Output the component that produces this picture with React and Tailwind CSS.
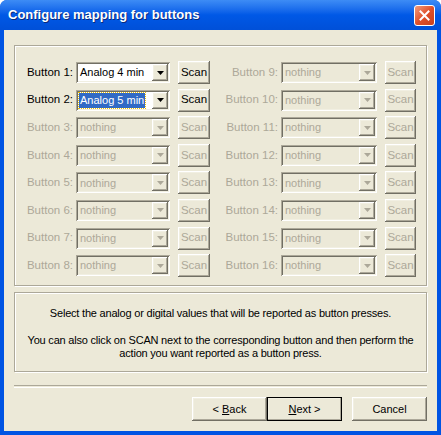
import React from 'react';

const raised =
    'bg-[#ece9d8] shadow-[inset_-1px_-1px_0_#716f64,inset_1px_1px_0_#fff,inset_-2px_-2px_0_#aca899,inset_2px_2px_0_#f1efe2]';
const sunken =
    'shadow-[inset_1px_1px_0_#aca899,inset_-1px_-1px_0_#fff,inset_2px_2px_0_#716f64,inset_-2px_-2px_0_#f1efe2]';
const etched = 'border border-[#aca899] shadow-[1px_1px_0_#fff,inset_1px_1px_0_#fff]';

const Arrow = ({ color }) => (
    <svg width="7" height="4" viewBox="0 0 7 4">
        <path d="M0 0h7L3.5 4z" fill={color} />
    </svg>
);

const Combo = ({ value, enabled, selected, width }) => (
    <div
        className={`flex h-[21px] items-center p-[2px] ${sunken} ${enabled ? 'bg-white' : 'bg-[#ece9d8]'}`}
        style={{ width }}
    >
        <div className="flex flex-1 items-center pl-[1px]">
            {selected ? (
                <span className="bg-[#316ac5] px-[1px] leading-[15px] text-white outline outline-1 outline-dotted outline-[#f0c000]">
                    {value}
                </span>
            ) : (
                <span className={`px-[1px] ${enabled ? 'text-black' : 'text-[#aca899]'}`}>{value}</span>
            )}
        </div>
        <div className={`flex h-[17px] w-[16px] shrink-0 items-center justify-center ${raised}`}>
            <Arrow color={enabled ? '#000' : '#aca899'} />
        </div>
    </div>
);

const ScanButton = ({ enabled, width }) => (
    <div
        className={`flex h-[23px] shrink-0 items-center justify-center text-[11.5px] ${raised} ${
            enabled ? 'text-black' : 'text-[#aca899]'
        }`}
        style={{ width }}
    >
        Scan
    </div>
);

const Row = ({ n, enabled, value, selected, comboWidth, scanWidth }) => (
    <div className="flex h-[23px] items-center">
        <div
            className={`w-[56px] shrink-0 pr-[3px] text-right text-[11.5px] ${
                enabled ? 'text-black' : 'text-[#aca899]'
            }`}
        >
            Button {n}:
        </div>
        <Combo value={value} enabled={enabled} selected={selected} width={comboWidth} />
        <div className="ml-[8px]">
            <ScanButton enabled={enabled} width={scanWidth} />
        </div>
    </div>
);

const WizardButton = ({ children, isDefault }) => (
    <div
        className={`flex h-[24px] w-[75px] items-center justify-center ${raised} ${
            isDefault ? 'outline outline-1 -outline-offset-1 outline-black' : ''
        }`}
    >
        {children}
    </div>
);

export default function App() {
    const left = [1, 2, 3, 4, 5, 6, 7, 8];
    const right = [9, 10, 11, 12, 13, 14, 15, 16];

    return (
        <div
            className="flex h-[435px] w-[441px] flex-col overflow-hidden rounded-t-[7px] bg-[#0054e3] text-[11px]"
            style={{ fontFamily: '"Liberation Sans", Arial, sans-serif' }}
        >
            {/* title bar */}
            <div className="flex h-[30px] items-center bg-gradient-to-b from-[#3d8cf5] via-[#0058e6] to-[#0050d8] pl-[8px] pr-[6px]">
                <span className="flex-1 text-[13px] font-bold text-white [text-shadow:1px_1px_0_#0a2a7a]">
                    Configure mapping for buttons
                </span>
                <div className="flex h-[21px] w-[21px] items-center justify-center rounded-[3px] border border-white bg-gradient-to-br from-[#f09a7a] via-[#e0502a] to-[#c8401c]">
                    <svg width="11" height="11" viewBox="0 0 11 11">
                        <path d="M1.5 1.5l8 8M9.5 1.5l-8 8" stroke="#fff" strokeWidth="2" strokeLinecap="square" />
                    </svg>
                </div>
            </div>

            {/* client area */}
            <div className="mx-[4px] mb-[4px] flex flex-1 flex-col bg-[#ece9d8] px-[10px] pt-[15px]">
                <div className={`h-[241px] ${etched}`}>
                    <div className="flex pl-[5px] pt-[15px]">
                        <div className="flex w-[205px] flex-col gap-[4.6px]">
                            {left.map((n) => (
                                <Row
                                    key={n}
                                    n={n}
                                    enabled={n <= 2}
                                    value={n === 1 ? 'Analog 4 min' : n === 2 ? 'Analog 5 min' : 'nothing'}
                                    selected={n === 2}
                                    comboWidth={94}
                                    scanWidth={32}
                                />
                            ))}
                        </div>
                        <div className="flex flex-col gap-[4.6px]">
                            {right.map((n) => (
                                <Row key={n} n={n} enabled={false} value="nothing" comboWidth={96} scanWidth={31} />
                            ))}
                        </div>
                    </div>
                </div>

                <div
                    className={`mt-[6px] h-[80px] ${etched} flex flex-col items-center pt-[14px] text-center leading-[13px] tracking-[-0.2px] text-black`}
                >
                    <p>Select the analog or digital values that will be reported as button presses.</p>
                    <p className="mt-[14px] px-[8px]">
                        You can also click on SCAN next to the corresponding button and then perform the action you
                        want reported as a button press.
                    </p>
                </div>

                <div className="mt-[13px] h-[2px] border-t border-[#aca899] shadow-[0_1px_0_#fff]" />

                <div className="mt-[10px] flex justify-end">
                    <WizardButton>
                        &lt; <span className="ml-[3px] underline">B</span>ack
                    </WizardButton>
                    <WizardButton isDefault>
                        <span className="underline">N</span>ext &gt;
                    </WizardButton>
                    <div className="ml-[10px]">
                        <WizardButton>Cancel</WizardButton>
                    </div>
                </div>
            </div>
        </div>
    );
}
